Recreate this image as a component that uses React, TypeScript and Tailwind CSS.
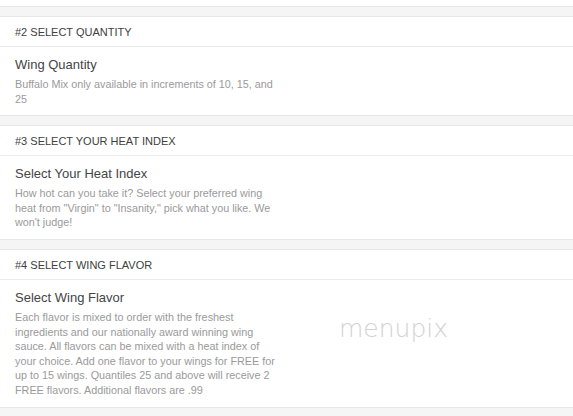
import type { ReactNode } from "react";

/** One step of the wing order form: a header strip and a short description. */
function Step({
  label,
  title,
  lines,
  children,
}: {
  label: string;
  title: string;
  lines: string[];
  children?: ReactNode;
}) {
  return (
    <section className="relative bg-white border-y border-[#e7e7e7]">
      <div className="h-[30px] flex items-center pt-[1px] px-[15px] border-b border-[#ececec] text-[11px] text-[#404040] uppercase">
        {label}
      </div>
      <div className="px-[15px] pt-[8px] pb-[9px]">
        <h3 className="text-[13px] leading-[20px] mb-[2px] text-[#444]">{title}</h3>
        <p className="text-[10.8px] leading-[14.6px] text-[#9a9a9a]">
          {lines.map((line, i) => (
            <span key={i} className="block whitespace-nowrap">
              {line}
            </span>
          ))}
        </p>
      </div>
      {children}
    </section>
  );
}

export default function App() {
  return (
    <div
      className="w-[573px] h-[416px] overflow-hidden bg-[#f5f5f5]"
      style={{ fontFamily: '"Liberation Sans", Arial, sans-serif' }}
    >
      <div className="h-[7px] bg-white border-b border-[#e7e7e7]" />
      <div className="flex flex-col gap-[9px] pt-[9px]">
        <Step
          label="#2 Select Quantity"
          title="Wing Quantity"
          lines={["Buffalo Mix only available in increments of 10, 15, and", "25"]}
        />
        <Step
          label="#3 Select Your Heat Index"
          title="Select Your Heat Index"
          lines={[
            "How hot can you take it? Select your preferred wing",
            'heat from "Virgin" to "Insanity," pick what you like. We',
            "won't judge!",
          ]}
        />
        <Step
          label="#4 Select Wing Flavor"
          title="Select Wing Flavor"
          lines={[
            "Each flavor is mixed to order with the freshest",
            "ingredients and our nationally award winning wing",
            "sauce. All flavors can be mixed with a heat index of",
            "your choice. Add one flavor to your wings for FREE for",
            "up to 15 wings. Quantiles 25 and above will receive 2",
            "FREE flavors. Additional flavors are .99",
          ]}
        >
          <span
            className="absolute left-[339px] top-[64px] text-[25px] leading-[29px] font-extralight text-[#d2d2d2]"
            style={{ fontFamily: '"DejaVu Sans", sans-serif' }}
          >
            menupix
          </span>
        </Step>
      </div>
    </div>
  );
}
